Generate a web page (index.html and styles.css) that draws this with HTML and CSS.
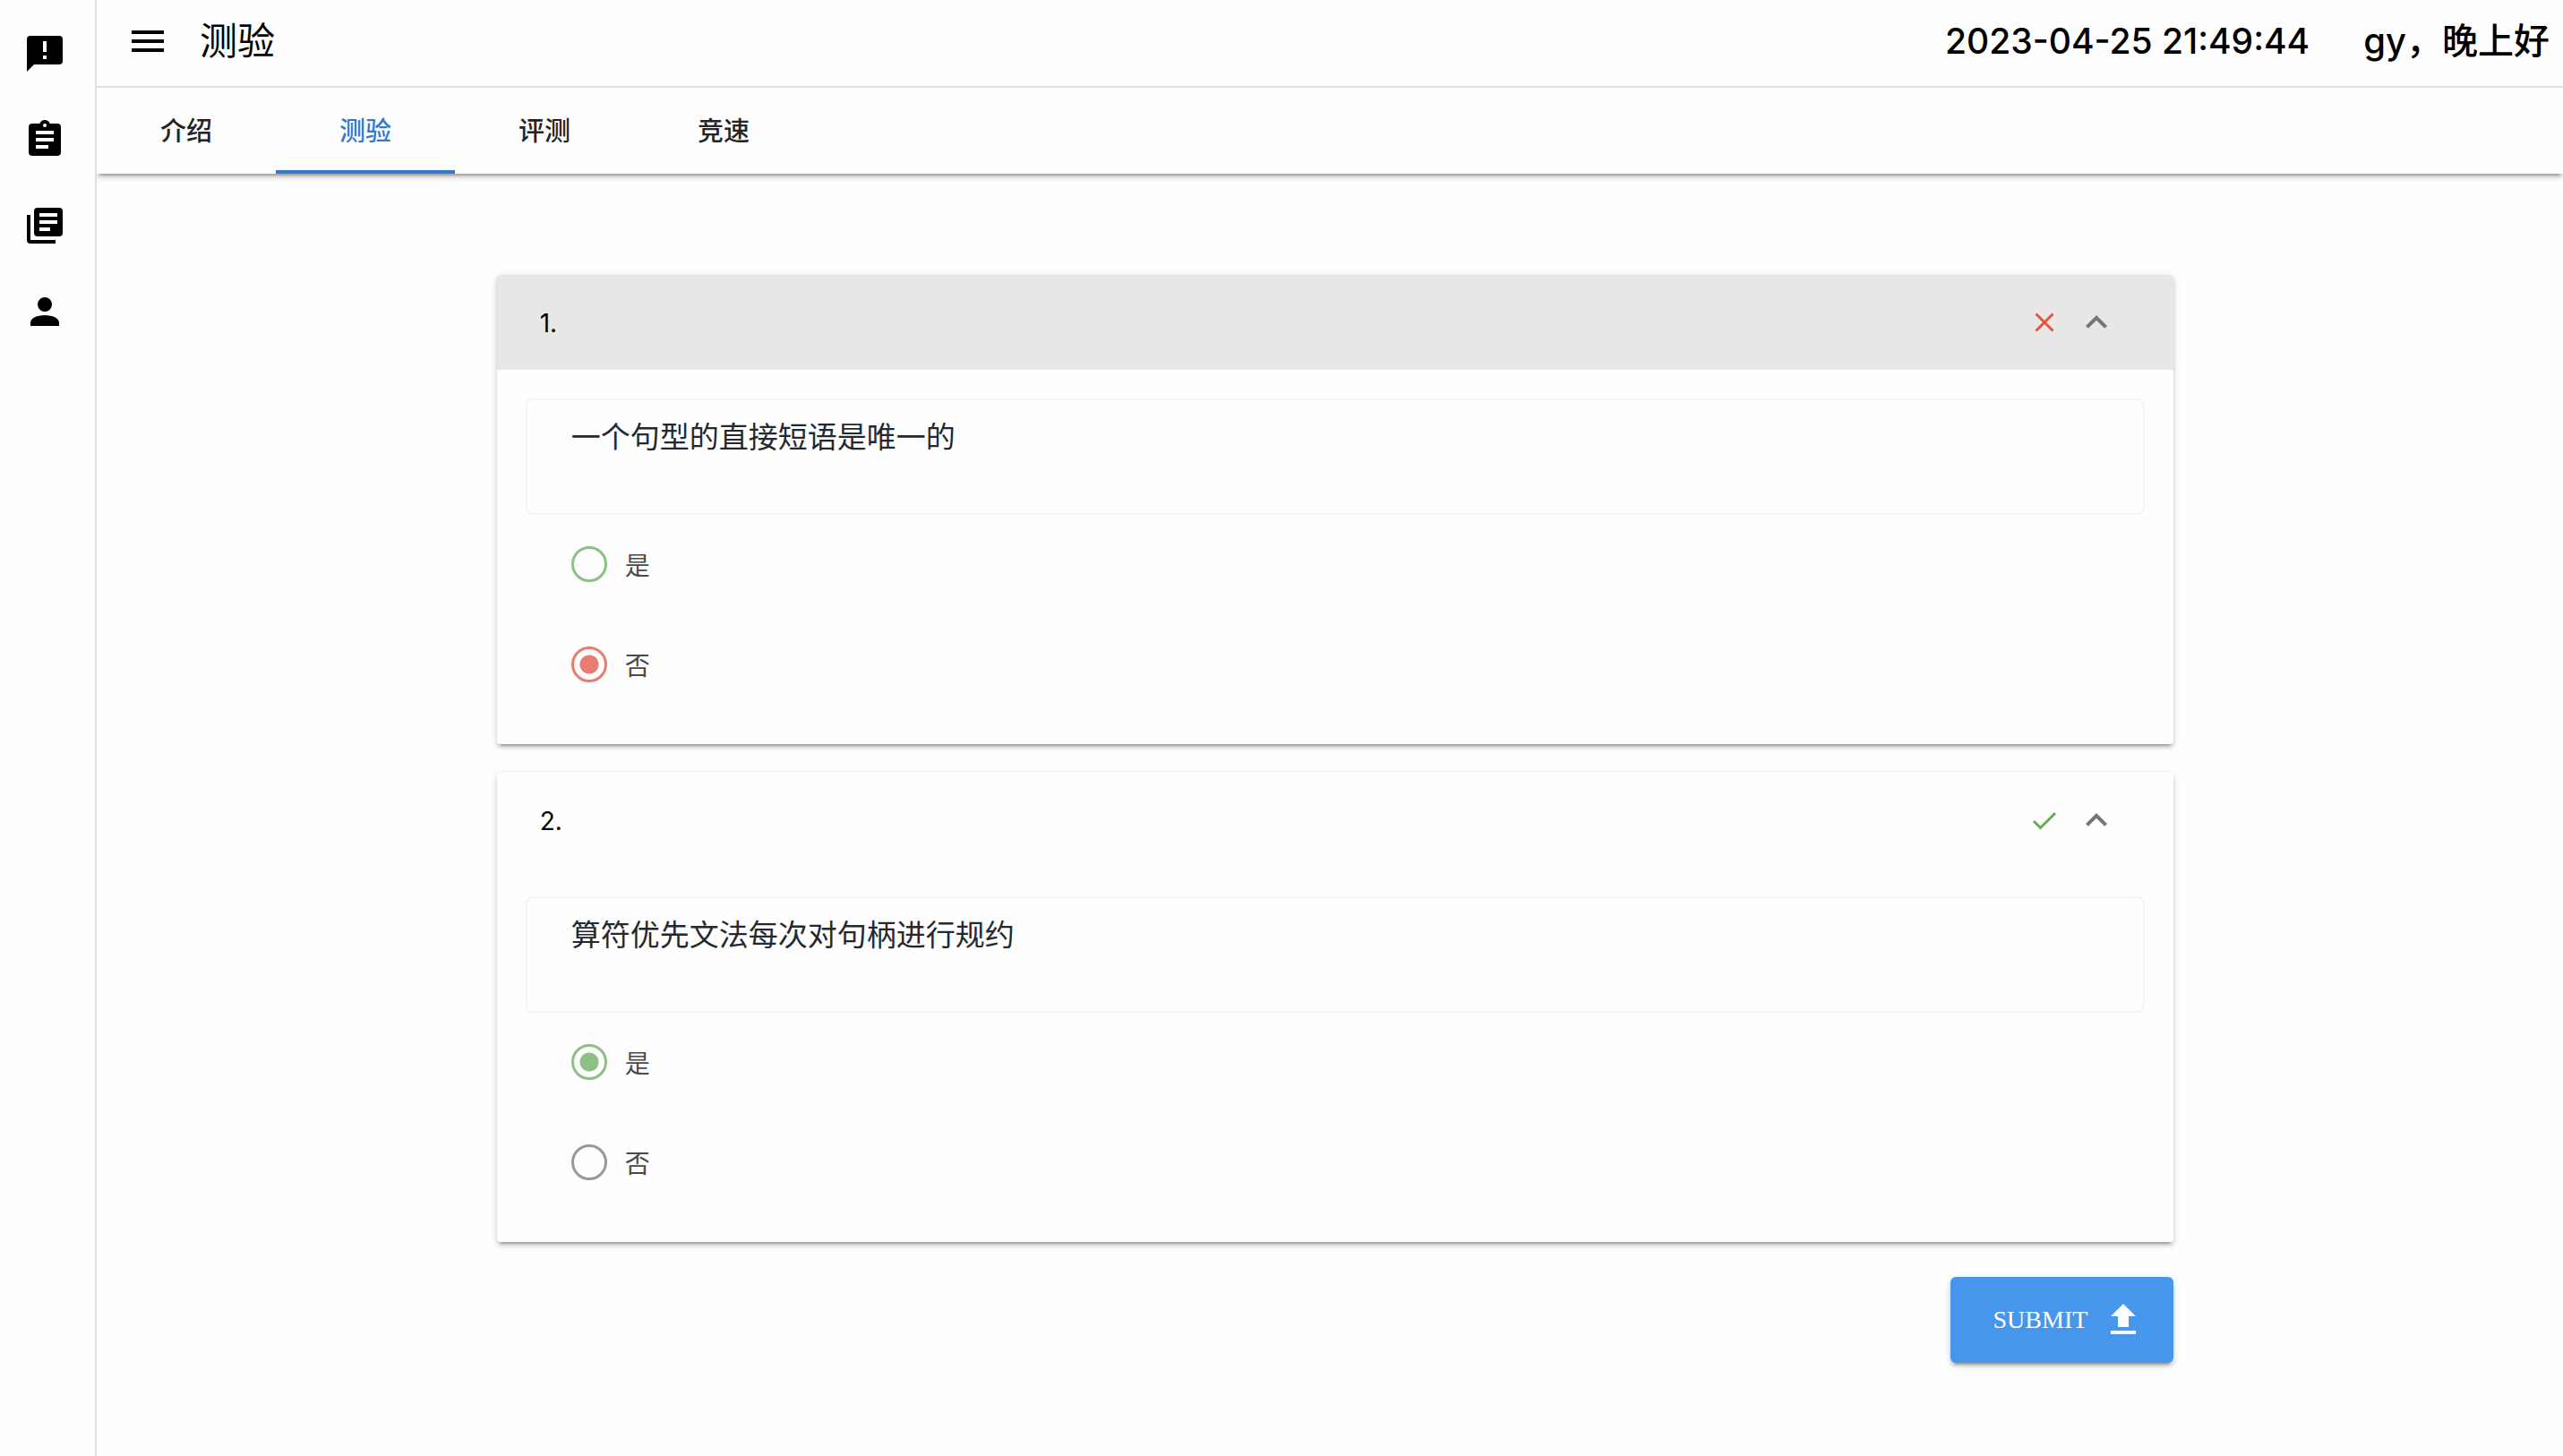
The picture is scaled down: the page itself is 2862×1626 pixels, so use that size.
FILE: index.html
```html
<!DOCTYPE html>
<html lang="zh-CN">
<head>
    <meta charset="UTF-8">
    <meta name="viewport" content="width=device-width, initial-scale=1.0">
    <title>测验</title>
    <link rel="stylesheet" href="styles.css">
</head>
<body>
    <div class="app">

        <!-- Side navigation -->
        <nav class="sidebar">
            <a href="#" aria-label="公告">
                <svg viewBox="0 0 24 24"><path d="M20 2H4a2 2 0 0 0-2 2v18l4-4h14a2 2 0 0 0 2-2V4a2 2 0 0 0-2-2zm-7 13h-2v-2h2zm0-4h-2V5h2z"/></svg>
            </a>
            <a href="#" aria-label="作业">
                <svg viewBox="0 0 24 24"><path d="M19 3h-4.18a3 3 0 0 0-5.64 0H5a2 2 0 0 0-2 2v14a2 2 0 0 0 2 2h14a2 2 0 0 0 2-2V5a2 2 0 0 0-2-2zm-7 0a1 1 0 1 1 0 2 1 1 0 0 1 0-2zm2 14H7v-2h7zm3-4H7v-2h10zm0-4H7V7h10z"/></svg>
            </a>
            <a href="#" aria-label="资料">
                <svg viewBox="0 0 24 24"><path d="M4 6H2v14a2 2 0 0 0 2 2h14v-2H4zm16-4H8a2 2 0 0 0-2 2v12a2 2 0 0 0 2 2h12a2 2 0 0 0 2-2V4a2 2 0 0 0-2-2zm-5 13H9v-2h6zm4-4H9V9h10zm0-4H9V5h10z"/></svg>
            </a>
            <a href="#" aria-label="我的">
                <svg viewBox="0 0 24 24"><path d="M12 4a4 4 0 1 1 0 8 4 4 0 0 1 0-8zm0 10c4.42 0 8 1.79 8 4v2H4v-2c0-2.21 3.58-4 8-4z"/></svg>
            </a>
        </nav>

        <div class="page">
            <header class="topbar">
                <button class="menu" type="button" aria-label="菜单">
                    <svg viewBox="0 0 24 24"><path d="M3 6h18v2H3zm0 5h18v2H3zm0 5h18v2H3z"/></svg>
                </button>
                <h1>测验</h1>
                <div class="status">
                    <time datetime="2023-04-25T21:49:44">2023-04-25 21:49:44</time>
                    <span>gy，晚上好</span>
                </div>
            </header>

            <nav class="tabs">
                <a href="#">介绍</a>
                <a href="#" class="active">测验</a>
                <a href="#">评测</a>
                <a href="#">竞速</a>
            </nav>

            <form class="quiz">
                <section class="card">
                    <button class="card-header focused" type="button" aria-expanded="true">
                        <span class="number">1.</span>
                        <svg class="wrong" viewBox="0 0 48 48"><path d="M14.500 14.500l19 19M33.500 14.500l-19 19"/></svg>
                        <svg class="chevron" viewBox="0 0 24 24"><path d="M7.41 15.41L12 10.83l4.59 4.58L18 14l-6-6-6 6z"/></svg>
                    </button>
                    <div class="card-body">
                        <div class="question">一个句型的直接短语是唯一的</div>
                        <div class="options">
                            <label class="green"><input type="radio" name="q1">是</label>
                            <label class="red"><input type="radio" name="q1" checked>否</label>
                        </div>
                    </div>
                </section>

                <section class="card">
                    <button class="card-header" type="button" aria-expanded="true">
                        <span class="number">2.</span>
                        <svg class="right" viewBox="0 0 48 48"><path d="M12 25l7.500 7.500L36 16"/></svg>
                        <svg class="chevron" viewBox="0 0 24 24"><path d="M7.41 15.41L12 10.83l4.59 4.58L18 14l-6-6-6 6z"/></svg>
                    </button>
                    <div class="card-body">
                        <div class="question">算符优先文法每次对句柄进行规约</div>
                        <div class="options">
                            <label class="green"><input type="radio" name="q2" checked>是</label>
                            <label><input type="radio" name="q2">否</label>
                        </div>
                    </div>
                </section>

                <button class="submit" type="button">
                    SUBMIT
                    <svg viewBox="0 0 24 24"><path d="M9 16h6v-6h4l-7-7-7 7h4zm-4 2h14v2H5z"/></svg>
                </button>
            </form>
        </div>
    </div>
</body>
</html>
```

FILE: styles.css
```css
* {
    box-sizing: border-box;
}
body {
    margin: 0;
    background: #fefefe;
    color: #000;
    font-family: Inter, "Noto Sans CJK SC", sans-serif;
    font-size: 28px;
}
a {
    color: inherit;
    text-decoration: none;
}
button {
    border: none;
    background: none;
    color: inherit;
    font: inherit;
    cursor: pointer;
}
svg {
    display: block;
    width: 48px;
    height: 48px;
    fill: currentColor;
}
.app {
    display: flex;
    min-height: 100vh;
}

/* side navigation */
.sidebar {
    flex: none;
    width: 108px;
    padding-top: 12px;
    border-right: 2px solid #e0e0e0;
}
.sidebar a {
    display: flex;
    align-items: center;
    height: 96px;
    padding-left: 26px;
}
.page {
    flex: 1;
    min-width: 0;
}

/* top bar */
.topbar {
    display: flex;
    align-items: center;
    height: 98px;
    padding: 0 15px 4px 33px;
    border-bottom: 2px solid #e0e0e0;
}
.menu {
    padding: 0;
}
.topbar h1 {
    margin: 0 0 0 34px;
    font-size: 42px;
    font-weight: 400;
    line-height: 60px;
}
.status {
    display: flex;
    gap: 60px;
    margin-left: auto;
    font-size: 40px;
    font-weight: 500;
    line-height: 60px;
}
.status time {
    font-size: 39px;
}

/* tabs */
.tabs {
    display: flex;
    height: 96px;
    color: #242424;
    font-size: 29px;
    font-weight: 500;
    box-shadow: 0 6px 2px -4px rgba(0,0,0,0.2), 0 4px 4px rgba(0,0,0,0.14), 0 2px 10px rgba(0,0,0,0.12);
    /* keep only the shadow below the bar */
    clip-path: inset(0 0 -16px 0);
}
.tabs a {
    display: flex;
    align-items: center;
    justify-content: center;
    width: 200px;
    border-bottom: 4px solid transparent;
}
.tabs .active {
    color: #3578d0;
    border-bottom-color: #3578d0;
}

/* quiz */
.quiz {
    display: flex;
    flex-direction: column;
    gap: 32px;
    width: 68%;
    margin-left: calc(16% + 6px);
    padding: 113px 0 48px;
}
.card {
    border-radius: 4px;
    overflow: hidden;
    box-shadow: 0 6px 2px -4px rgba(0,0,0,0.2), 0 4px 4px rgba(0,0,0,0.14), 0 2px 10px rgba(0,0,0,0.12);
    background: #fefefe;
}
.card-header {
    display: flex;
    align-items: center;
    width: 100%;
    height: 106px;
    padding: 0 62px 0 48px;
    text-align: left;
}
.card-header.focused {
    background: #e7e7e7;
}
.number {
    flex: 1;
    padding-top: 2px;
}
.wrong,
.right {
    margin-right: 10px;
    fill: none;
    stroke: #e5513f;
    stroke-width: 3;
}
.right {
    stroke: #62ab55;
}
.chevron {
    color: #757575;
}
.card-body {
    padding: 32px;
}
.question {
    height: 130px;
    padding: 17px 49px;
    border: 2px solid #f1f6fb;
    border-radius: 8px;
    color: #24292f;
    font-size: 33px;
    line-height: 48px;
}
.options {
    display: flex;
    flex-direction: column;
    gap: 64px;
    padding: 31px 51px 33px;
}
.options label {
    display: flex;
    align-items: center;
    gap: 20px;
    height: 48px;
    color: #4a4a4a;
}
.options input {
    flex: none;
    appearance: none;
    width: 40px;
    height: 40px;
    margin: 0;
    border: 3px solid #999;
    border-radius: 50%;
}
.options input:checked {
    background: radial-gradient(circle, currentColor 10px, transparent 11px);
}
.options .green input {
    color: #8cc084;
    border-color: #8cc084;
}
.options .red input {
    color: #e97b70;
    border-color: #e97b70;
}
.submit {
    display: flex;
    align-items: center;
    align-self: flex-end;
    gap: 16px;
    height: 96px;
    padding: 0 32px 0 48px;
    margin-top: 7px;
    border-radius: 6px;
    background: #4696ec;
    color: #fff;
    font-family: "Liberation Serif", serif;
    box-shadow: 0 6px 2px -4px rgba(0,0,0,0.2), 0 4px 4px rgba(0,0,0,0.14), 0 2px 10px rgba(0,0,0,0.12);
}
```
